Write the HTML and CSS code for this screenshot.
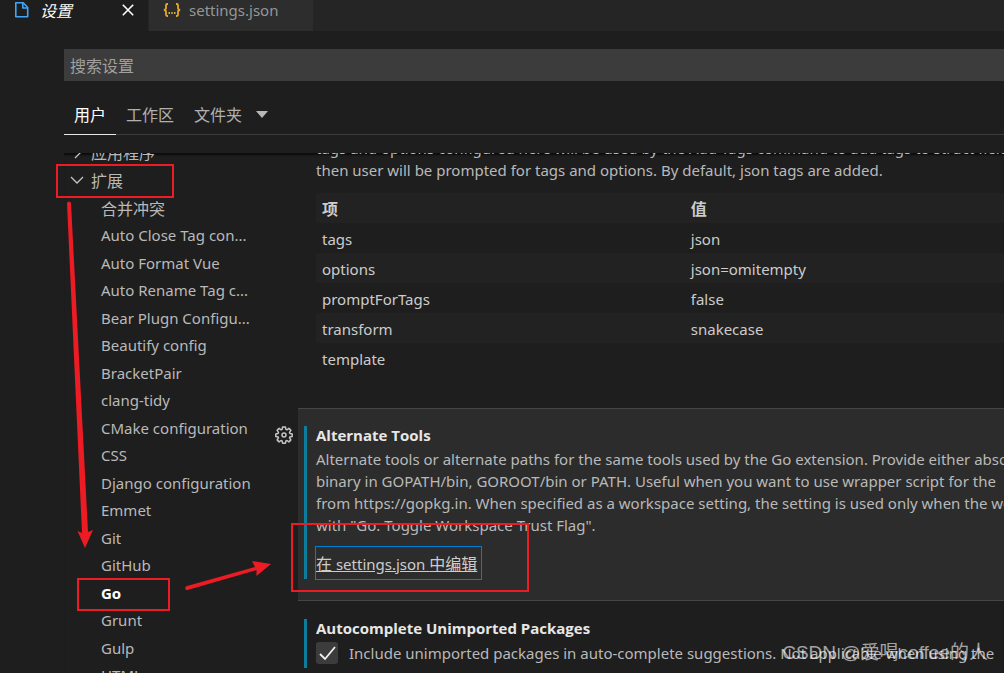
FILE: index.html
```html
<!DOCTYPE html>
<html lang="zh-CN">
<head>
<meta charset="utf-8">
<title>设置</title>
<link rel="stylesheet" href="styles.css">
</head>
<body>
<div class="editor-tabs" role="tablist">
  <div class="editor-tab active" role="tab" aria-selected="true">
    <svg class="file-icon" viewBox="0 0 16 18" fill="none" stroke="#42a5f5" stroke-width="1.6" stroke-linejoin="round"><path d="M1.8 1.8h7.4l4.5 4.7v9.3H1.8z"/><path d="M8.8 2v5h4.8"/></svg>
    <span class="tab-title zh">设置</span>
    <button class="close" aria-label="关闭"><svg viewBox="0 0 12 12" stroke="#fff" stroke-width="1.6"><path d="M.8.8l10.4 10.4M11.2.8L.8 11.2"/></svg></button>
  </div>
  <div class="editor-tab" role="tab">
    <svg class="json-icon" viewBox="0 0 18 14" fill="none" stroke="#e0a92a" stroke-width="1.8"><path d="M5 1H4.2Q3 1 3 2.2v2.6Q3 7 .8 7 3 7 3 9.200v2.600Q3 13 4.200 13H5M13 1h.8Q15 1 15 2.200v2.600Q15 7 17.200 7 15 7 15 9.200v2.600Q15 13 13.800 13H13"/><path d="M5.500 10h7" stroke-dasharray="1.500 1.250"/></svg>
    <span>settings.json</span>
  </div>
</div>
<main class="settings-editor">
  <input class="search zh" type="text" placeholder="搜索设置" aria-label="搜索设置">
  <nav class="scopes zh">
    <button class="scope active">用户</button>
    <button class="scope">工作区</button>
    <button class="scope">文件夹<svg class="caret" viewBox="0 0 12 7"><path d="M0 0h12L6 7z" fill="#b8b8b8"/></svg></button>
  </nav>
  <div class="panes">
    <ul class="tree">
      <li class="group zh"><svg class="chevron" viewBox="0 0 14 14"><path d="M5 2l5 5-5 5"/></svg>应用程序</li>
      <li class="group zh"><svg class="chevron" viewBox="0 0 14 14"><path d="M1 4l6 6 6-6"/></svg>扩展</li>
      <li class="zh">合并冲突</li>
      <li>Auto Close Tag con...</li>
      <li>Auto Format Vue</li>
      <li>Auto Rename Tag c...</li>
      <li>Bear Plugn Configu...</li>
      <li>Beautify config</li>
      <li>BracketPair</li>
      <li>clang-tidy</li>
      <li>CMake configuration</li>
      <li>CSS</li>
      <li>Django configuration</li>
      <li>Emmet</li>
      <li>Git</li>
      <li>GitHub</li>
      <li class="selected">Go</li>
      <li>Grunt</li>
      <li>Gulp</li>
      <li>HTML</li>
    </ul>
    <div class="settings-list">
      <section class="setting first">
        <div class="setting-body">
          <div class="content">
            <p>tags and options configured here will be used by the Add Tags command to add tags to struct fields.<br>then user will be prompted for tags and options. By default, json tags are added.</p>
            <table>
              <thead><tr class="zh"><th scope="col">项</th><th scope="col">值</th></tr></thead>
              <tbody>
                <tr><td>tags</td><td>json</td></tr>
                <tr><td>options</td><td>json=omitempty</td></tr>
                <tr><td>promptForTags</td><td>false</td></tr>
                <tr><td>transform</td><td>snakecase</td></tr>
                <tr><td>template</td><td></td></tr>
              </tbody>
            </table>
          </div>
        </div>
      </section>
      <section class="setting focused">
        <button class="gear" aria-label="更多操作"><svg viewBox="0 0 18 18" fill="none" stroke="#c5c5c5" stroke-width="1.500" stroke-linejoin="round"><path d="M7.600 1h2.800l.5 2.400 1 .4 2-1.400 2 2-1.400 2 .4 1 2.300.5v2.500l-2.300.5-.4 1 1.400 2-2 2-2-1.400-1 .4-.5 2.300H7.600l-.5-2.300-1-.4-2 1.400-2-2 1.400-2-.4-1L.8 10.400V7.900l2.300-.5.4-1-1.400-2 2-2 2 1.400 1-.4z"/><circle cx="9" cy="9" r="2"/></svg></button>
        <div class="setting-body">
          <div class="content modified">
            <h2>Alternate Tools</h2>
            <p>Alternate tools or alternate paths for the same tools used by the Go extension. Provide either absolute<br>binary in GOPATH/bin, GOROOT/bin or PATH. Useful when you want to use wrapper script for the<br>from https://gopkg.in. When specified as a workspace setting, the setting is used only when the workspace<br>with "Go: Toggle Workspace Trust Flag".</p>
            <a class="edit-link" href="#"><span class="zh">在</span> settings.json <span class="zh">中编辑</span></a>
          </div>
        </div>
      </section>
      <section class="setting">
        <div class="setting-body">
          <div class="content modified">
            <h2>Autocomplete Unimported Packages</h2>
            <label class="check"><input type="checkbox" checked><span>Include unimported packages in auto-complete suggestions. Not applicable when using the</span></label>
          </div>
        </div>
      </section>
    </div>
  </div>
</main>
<svg class="marks" width="1004" height="673" viewBox="0 0 1004 673" fill="none" stroke="#ed1c24" stroke-width="2" aria-hidden="true">
  <rect x="57" y="165" width="116" height="32"/>
  <rect x="78" y="579" width="91" height="31"/>
  <rect x="292" y="524" width="236" height="67"/>
  <g fill="#ed1c24" stroke="none">
    <path d="M67 203q2-3 4 0l17 329 5-2-8 18-7.500-17 4.500 2z"/>
    <path d="M186 590q-2-3 1-4l68-19-3-6 19 3-14.500 12v-6l-69 20z"/>
  </g>
</svg>
<div class="watermark">CSDN @爱喝coffee的人</div>
</body>
</html>
```

FILE: styles.css
```css
* { box-sizing: border-box; }
body {
  margin: 0;
  height: 100vh;
  overflow: hidden;
  position: relative;
  display: flex;
  flex-direction: column;
  background: #1e1e1e;
  color: #b9b9b9;
  font: 15px/22px "Noto Sans", "Noto Sans CJK SC", sans-serif;
  white-space: nowrap;
}
button, input { font: inherit; color: inherit; border: 0; background: none; padding: 0; }
svg { display: block; flex: none; }
.zh { font-size: 16px; font-family: "Noto Sans CJK SC", sans-serif; }

.editor-tabs { display: flex; height: 31px; flex: none; background: #252526; }
.editor-tab {
  display: flex;
  align-items: center;
  width: 164px;
  padding: 0 14px 12px;
  gap: 8px;
  background: #2d2d2d;
  color: #969696;
}
.editor-tab.active { width: 149px; gap: 10px; background: #1e1e1e; color: #fff; border-right: 1px solid #252526; }
.tab-title { font-style: italic; }
.file-icon { width: 16px; height: 18px; }
.json-icon { width: 18px; height: 14px; }
.close { margin-left: auto; }
.close svg { width: 12px; height: 12px; }

.settings-editor { flex: 1; min-height: 0; display: flex; flex-direction: column; padding: 18px 0 0 64px; }
.search { width: 100%; height: 32px; flex: none; padding: 0 6px; background: #3c3c3c; border-radius: 0; outline: 0; }
.search::placeholder { color: #a0a0a0; opacity: 1; }
.scopes { display: flex; height: 36px; margin-top: 18px; flex: none; border-bottom: 1px solid #3c3c3c; }
.scope { display: flex; align-items: center; gap: 14px; padding: 0 10px 5px; height: 36px; color: #b0b0b0; border-bottom: 1px solid transparent; }
.scope.active { color: #fff; border-bottom-color: #e7e7e7; }
.caret { width: 12px; height: 7px; }

.panes { flex: 1; min-height: 0; margin-top: 18px; display: flex; overflow: hidden; box-shadow: inset 0 3px 2px -1px #0c0c0c; }
.tree { list-style: none; width: 200px; flex: none; margin: -14px 0 0; padding: 0; }
.tree li { height: 27px; line-height: 29px; padding-left: 37px; }
.tree li:nth-child(even) { height: 28px; }
.tree .group { display: flex; align-items: center; gap: 7px; padding-left: 6px; }
.tree .selected { color: #fff; font-weight: 700; }
.chevron { width: 14px; height: 14px; fill: none; stroke: #c5c5c5; stroke-width: 1.3; }

.settings-list { flex: 1; min-width: 0; overflow: hidden; }
.setting { display: grid; grid-template-columns: 34px minmax(0, 1fr); }
.setting-body { grid-column: 2; padding: 17px 0 21px 6px; border: 1px solid transparent; border-width: 1px 0; }
.first .setting-body { padding: 0 0 34px 6px; margin-top: -17px; }
.focused .setting-body { background: #2c2c2c; border-color: #454545; }
.gear { grid-column: 1; grid-row: 1; align-self: start; margin: 18px 0 0 11px; width: 18px; }
.gear svg { width: 18px; height: 18px; }
.content { padding-left: 9px; border-left: 3px solid transparent; display: flow-root; }
.modified { border-left-color: #0c7d9d; }
h2 { margin: 0 0 4px; font: 700 15px/18px "Open Sans", sans-serif; color: #e7e7e7; }
p { margin: 0; }
table { width: 100%; margin-top: 12px; border-collapse: collapse; table-layout: fixed; color: #cccccc; }
tr { height: 30px; }
tr.zh { font-weight: 700; }
thead tr, tbody tr:nth-child(even) { background: #222222; }
th, td { padding: 0 6px; text-align: left; }
td { padding-top: 1px; }
th:first-child { width: 53.6%; }
.edit-link {
  display: inline-block;
  height: 32px;
  margin-top: 11px;
  padding-right: 4px;
  line-height: 33px;
  vertical-align: top;
  color: #cccccc;
  outline: 1px solid #007fd4;
}
.check { display: flex; align-items: center; gap: 11px; height: 27px; padding-bottom: 3px; }
.check input {
  appearance: none;
  width: 22px;
  height: 22px;
  margin: 0;
  flex: none;
  border-radius: 3px;
  background: #3c3c3c;
}
.check input:checked {
  background: #3c3c3c url("data:image/svg+xml,%3Csvg xmlns='http://www.w3.org/2000/svg' viewBox='0 0 22 22'%3E%3Cpath d='M4 12l5 5L19 5' fill='none' stroke='%23f0f0f0' stroke-width='1.8'/%3E%3C/svg%3E");
}

.marks { position: absolute; top: 0; left: 0; pointer-events: none; }
.watermark {
  position: absolute;
  right: 16px;
  bottom: 7px;
  font: 19px/26px "Liberation Sans", "Noto Sans CJK SC", sans-serif;
  color: rgba(255, 255, 255, 0.6);
}
```
